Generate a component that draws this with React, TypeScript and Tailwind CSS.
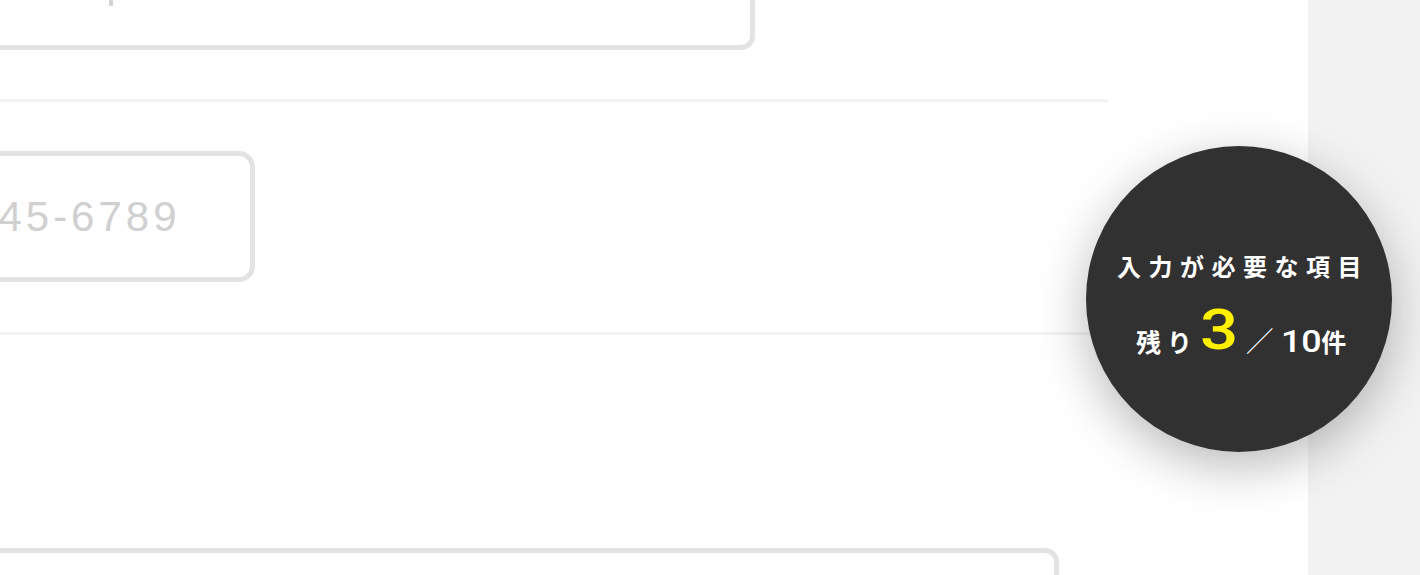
import React from 'react';

const jp = { fontFamily: '"Noto Sans CJK JP", "Noto Sans", sans-serif' };
const num = { fontFamily: '"Liberation Sans", Arial, "Noto Sans CJK JP", sans-serif' };
const round = { fontFamily: 'Roboto, "Liberation Sans", "Noto Sans CJK JP", sans-serif' };

const RemainingBadge: React.FC<{ left: number; total: number }> = ({ left, total }) => (
  <div className="absolute left-[1086px] top-[146px] w-[306px] h-[306px] rounded-full bg-[#313131] shadow-[0_14px_50px_rgba(0,0,0,0.28)] flex flex-col pt-[108px] text-white">
    <p className="text-[24px] leading-none font-bold tracking-[7.5px] pl-[31px] whitespace-nowrap" style={jp}>
      入力が必要な項目
    </p>
    <div className="flex items-baseline mt-[27px] pl-[50px] leading-none whitespace-nowrap">
      <span className="text-[25px] font-bold tracking-[6px]" style={jp}>残り</span>
      <span
        className="inline-block text-[56px] font-medium text-[#fff000] ml-[2px] mr-[10px] scale-x-[1.2] origin-left -translate-y-[3px]"
        style={round}
      >
        {left}
      </span>
      <span className="text-[28px] font-light ml-[4px] mr-[7px]" style={jp}>／</span>
      <span
        className="inline-block text-[32px] font-medium scale-x-[1.12] origin-left mr-[4px]"
        style={round}
      >
        {total}
      </span>
      <span className="text-[25px] font-bold" style={jp}>件</span>
    </div>
  </div>
);

export default function App() {
  return (
    <div className="relative w-[1420px] h-[575px] overflow-hidden bg-white flex">
      {/* form column */}
      <div className="flex-1 overflow-hidden">
        <div className="-ml-[300px] w-[1408px] flex flex-col">
          {/* name / address */}
          <div className="pb-[49px] border-b-[3px] border-[#f3f3f3]">
            <div className="-mt-[81px] ml-[145px] w-[910px] h-[131px] rounded-[14px] border-[5px] border-[#e3e3e3] pt-[42px] pl-[259px]">
              <div className="w-[4px] h-[40px] bg-[#d4d4d4]" />
            </div>
          </div>

          {/* phone */}
          <div className="pt-[49px] pb-[50px] border-b-[3px] border-[#f3f3f3]">
            <div className="ml-[145px] w-[410px] h-[131px] rounded-[16px] border-[5px] border-[#e3e3e3] flex items-center pl-[21px] overflow-hidden">
              <span className="text-[42px] tracking-[4px] text-[#d0d0d0] whitespace-nowrap" style={num}>
                012-345-6789
              </span>
            </div>
          </div>

          {/* message */}
          <div className="pt-[213px]">
            <div className="ml-[145px] w-[1214px] h-[200px] rounded-[14px] border-[5px] border-[#e3e3e3]" />
          </div>
        </div>
      </div>

      {/* side rail */}
      <div className="w-[112px] bg-[#f2f2f2]" />

      <RemainingBadge left={3} total={10} />
    </div>
  );
}
